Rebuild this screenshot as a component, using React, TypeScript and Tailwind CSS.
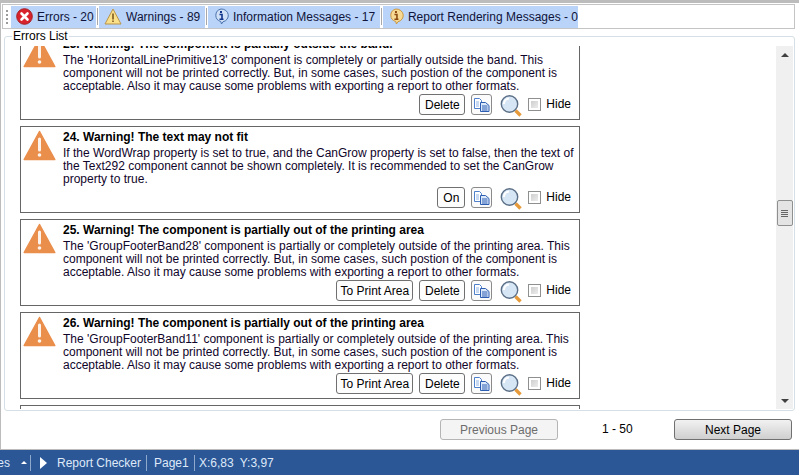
import React from 'react';

const font = { fontFamily: '"Liberation Sans", Arial, sans-serif' };

function ErrorIcon() {
  return (
    <svg width="17" height="17" viewBox="0 0 17 17">
      <circle cx="8.5" cy="8.5" r="7.8" fill="#d8232c" stroke="#a91d22" />
      <path d="M5.5 5.5l6 6M11.5 5.5l-6 6" stroke="#fff" strokeWidth="2.6" strokeLinecap="round" />
    </svg>
  );
}

function WarnIcon() {
  return (
    <svg width="18" height="17" viewBox="0 0 18 17">
      <path d="M9 1L17 16H1z" fill="#fbe08a" stroke="#b9944a" strokeLinejoin="round" />
      <path d="M9 5.5v6" stroke="#7d5a1e" strokeWidth="1.6" />
      <path d="M9 12.5v1.6" stroke="#7d5a1e" strokeWidth="1.6" />
    </svg>
  );
}

function BubbleIcon({ fill, stroke, mark }: { fill: string; stroke: string; mark: string }) {
  return (
    <svg width="16" height="17" viewBox="0 0 16 17">
      <path d="M8 1a7 6.5 0 0 1 2 12.8L8.5 16l-.7-2.5A7 6.5 0 0 1 8 1z" fill={fill} stroke={stroke} />
      <path d="M8 3v2" stroke={mark} strokeWidth="2" />
      <path d="M6.5 6.5H9v4.5M6.5 11.2h4" stroke={mark} strokeWidth="1.6" fill="none" />
    </svg>
  );
}

function CopyIcon() {
  return (
    <svg width="16" height="14" viewBox="0 0 16 14">
      <path d="M.5.5h5l2 2v8h-7z" fill="#fff" stroke="#4f80cc" />
      <path d="M2 4h3M2 6h3M2 8h3" stroke="#8fb2e6" />
      <path d="M6.5 4.5h5l3.5 3v6H6.5z" fill="#dce9fb" stroke="#2c5db0" />
      <path d="M8 8h5.5M8 10h5.5M8 12h5.5" stroke="#2c5db0" />
    </svg>
  );
}

function GlassIcon() {
  return (
    <svg width="23" height="24" viewBox="0 0 23 24">
      <path d="M15.5 16.5l5 5" stroke="#e69a3a" strokeWidth="3.4" />
      <circle cx="9.5" cy="10" r="8.2" fill="#d6e6f5" stroke="#5b6f86" strokeWidth="1.4" />
      <path d="M4 10a5.5 5.5 0 0 1 5-5.5" stroke="#fff" strokeWidth="2" fill="none" />
    </svg>
  );
}

function Triangle() {
  return (
    <svg width="33" height="31" viewBox="0 0 33 31">
      <path d="M16.5 1.5L31.8 29.5H1.2z" fill="#ea8e4c" stroke="#ea8e4c" strokeWidth="1.5" strokeLinejoin="round" />
      <path d="M16.5 9v11" stroke="#fdf3ea" strokeWidth="3" strokeLinecap="round" />
      <circle cx="16.5" cy="25" r="1.8" fill="#fdf3ea" />
    </svg>
  );
}

function ActionButton({ label, width }: { label: string; width: string }) {
  return (
    <button className={`${width} block h-[21px] shrink-0 rounded-[3px] border border-[#707070] bg-[#fdfdfd] text-[12px] leading-none text-black`}>
      {label}
    </button>
  );
}

function Card({ title, lines, actions }: { title: string; lines: string[]; actions: { label: string; width: string }[] }) {
  return (
    <div className="flex h-[87px] w-[560px] shrink-0 border border-[#666] bg-white pl-[2px]">
      <div className="w-[40px] shrink-0 pt-[3px]">
        <Triangle />
      </div>
      <div className="flex min-w-0 flex-1 flex-col pr-[8px]">
        <div className="h-[20px] pt-[3px] text-[12px] font-bold leading-[15px] text-black">{title}</div>
        <div className="flex-1 text-[12px] leading-[13px] text-[#10052a]">
          {lines.map((l) => (
            <div key={l} className="whitespace-nowrap">{l}</div>
          ))}
        </div>
        <div className="flex h-[25px] items-start justify-end">
          {actions.map((a) => (
            <div key={a.label} className="mr-[6px]">
              <ActionButton label={a.label} width={a.width} />
            </div>
          ))}
          <button className="flex h-[21px] w-[21px] shrink-0 items-center justify-center rounded-[3px] border border-[#8a8a8a] bg-[#fbfbfb]">
            <CopyIcon />
          </button>
          <div className="ml-[8px] mr-[5px]">
            <GlassIcon />
          </div>
          <div className="mt-[4px] mr-[5px] h-[13px] w-[13px] border border-[#8e8f8f] bg-white p-[2px]">
            <div className="h-full w-full bg-gradient-to-br from-[#cfcfcf] to-[#ececec]" />
          </div>
          <span className="text-[12px] leading-[21px] text-black">Hide</span>
        </div>
      </div>
    </div>
  );
}

const outsideBand = [
  "The 'HorizontalLinePrimitive13' component is completely or partially outside the band. This",
  'component will not be printed correctly. But, in some cases, such postion of the component is',
  'acceptable. Also it may cause some problems with exporting a report to other formats.',
];

const printArea = (name: string) => [
  `The '${name}' component is partially or completely outside of the printing area. This`,
  'component will not be printed correctly. But, in some cases, such postion of the component is',
  'acceptable. Also it may cause some problems with exporting a report to other formats.',
];

const del = { label: 'Delete', width: 'w-[46px]' };
const toArea = { label: 'To Print Area', width: 'w-[77px]' };

const tabs = [
  { icon: <ErrorIcon />, label: 'Errors - 20', width: 'w-[85px]' },
  { icon: <WarnIcon />, label: 'Warnings - 89', width: 'w-[106px]' },
  { icon: <BubbleIcon fill="#cfe0f7" stroke="#4d74ad" mark="#12358c" />, label: 'Information Messages - 17', width: 'w-[172px]' },
  { icon: <BubbleIcon fill="#f8d994" stroke="#c9963f" mark="#8a4a10" />, label: 'Report Rendering Messages - 0', width: 'w-[195px]' },
];

export default function App() {
  return (
    <div className="flex h-[475px] w-[799px] flex-col overflow-hidden bg-white" style={font}>
      <div className="flex flex-1 flex-col border-l border-t-[3px] border-[#bcbcbc] pl-[1px] pr-[4px] pt-[1px]">
        {/* toolbar */}
        <div className="flex h-[25px] shrink-0 items-center border border-[#c4c4c4] bg-white pl-[3px]">
          <div className="mr-[1px] flex w-[4px] flex-col gap-[2px]">
            <span className="h-[2px] w-[2px] bg-[#9a9a9a]" />
            <span className="h-[2px] w-[2px] bg-[#9a9a9a]" />
            <span className="h-[2px] w-[2px] bg-[#9a9a9a]" />
            <span className="h-[2px] w-[2px] bg-[#9a9a9a]" />
          </div>
          {tabs.map((t, i) => (
            <React.Fragment key={t.label}>
              {i > 0 && <div className="mx-[1px] h-[17px] w-[1px] bg-[#a8a8a8]" />}
              <div className={`${t.width} flex h-[22px] shrink-0 items-center gap-[4px] bg-[#b9d3f9] pl-[5px] text-[12px] text-[#10143a]`}>
                {t.icon}
                <span className="whitespace-nowrap">{t.label}</span>
              </div>
            </React.Fragment>
          ))}
        </div>

        {/* errors list */}
        <fieldset className="ml-[2px] flex h-[382px] min-h-0 flex-col rounded-[3px] border border-[#d5dfe5] pl-[15px] pr-[1px] pb-[1px]">
          <legend className="-ml-[8px] px-[1px] text-[12px] leading-[14px] text-black">Errors List</legend>
          <div className="flex min-h-0 flex-1 pt-[3px]">
            <div className="flex min-h-0 flex-1 flex-col gap-[6px] overflow-hidden">
              <div className="-mt-[19px]" />
              <Card title="23. Warning! The component is partially outside the band." lines={outsideBand} actions={[del]} />
              <Card
                title="24. Warning! The text may not fit"
                lines={[
                  'If the WordWrap property is set to true, and the CanGrow property is set to false, then the text of',
                  'the Text292 component cannot be shown completely. It is recommended to set the CanGrow',
                  'property to true.',
                ]}
                actions={[{ label: 'On', width: 'w-[28px]' }]}
              />
              <Card title="25. Warning! The component is partially out of the printing area" lines={printArea('GroupFooterBand28')} actions={[toArea, del]} />
              <Card title="26. Warning! The component is partially out of the printing area" lines={printArea('GroupFooterBand11')} actions={[toArea, del]} />
              <div className="h-[87px] w-[560px] shrink-0 border border-[#666]" />
            </div>
            {/* scrollbar */}
            <div className="flex w-[17px] shrink-0 flex-col items-center bg-[#f0f0f0]">
              <div className="flex h-[17px] items-center justify-center">
                <div className="h-0 w-0 border-x-[4px] border-b-[4px] border-x-transparent border-b-[#404040]" />
              </div>
              <div className="mt-[137px] flex h-[26px] w-[16px] flex-col items-center justify-center gap-[1px] rounded-[2px] border border-[#8e8f8f] bg-[#e4e4e4]">
                <span className="h-[1px] w-[7px] bg-[#666]" />
                <span className="h-[1px] w-[7px] bg-[#666]" />
                <span className="h-[1px] w-[7px] bg-[#666]" />
                <span className="h-[1px] w-[7px] bg-[#666]" />
              </div>
              <div className="flex-1" />
              <div className="flex h-[17px] items-center justify-center">
                <div className="h-0 w-0 border-x-[4px] border-t-[4px] border-x-transparent border-t-[#404040]" />
              </div>
            </div>
          </div>
        </fieldset>

        {/* paging */}
        <div className="flex flex-1 items-start pt-[8px] text-[12px]">
          <button className="ml-[438px] h-[21px] w-[118px] rounded-[3px] border border-[#b5b5b5] bg-[#f4f4f4] text-[#6d6d6d]">Previous Page</button>
          <span className="ml-[44px] w-[72px] leading-[21px] text-black">1 - 50</span>
          <button className="h-[21px] w-[118px] rounded-[3px] border border-[#707070] bg-gradient-to-b from-[#f2f2f2] to-[#cfcfcf] text-black">Next Page</button>
        </div>
      </div>

      {/* status bar */}
      <div className="flex h-[26px] shrink-0 items-center border-t border-[#bcbcbc] bg-[#2b5797] text-[12px] text-[#dfe9f7]">
        <span className="-ml-[24px] w-[33px] text-right">Pages</span>
        <div className="ml-[12px] h-0 w-0 border-x-[3px] border-b-[3px] border-x-transparent border-b-white" />
        <div className="ml-[3px] h-[16px] w-[1px] bg-[#8fa9cc]" />
        <div className="ml-[9px] h-0 w-0 border-y-[6px] border-l-[7px] border-y-transparent border-l-white" />
        <span className="ml-[10px] w-[81px] whitespace-nowrap">Report Checker</span>
        <div className="ml-[8px] h-[16px] w-[1px] bg-[#8fa9cc]" />
        <span className="ml-[7px] w-[32px]">Page1</span>
        <div className="ml-[8px] h-[16px] w-[1px] bg-[#8fa9cc]" />
        <span className="ml-[4px]">X:6,83</span>
        <span className="ml-[6px]">Y:3,97</span>
      </div>
    </div>
  );
}
